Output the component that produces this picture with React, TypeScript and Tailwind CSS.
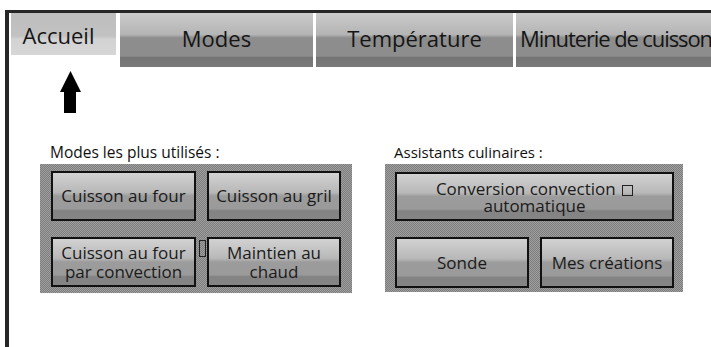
import type { ReactNode } from 'react';

const tabBg =
  'bg-[linear-gradient(to_bottom,#cbcbcb_0%,#b4b4b4_40%,#8d8d8d_46%,#8d8d8d_80%,#747474_82%,#7a7a7a_100%)]';
const btnBg =
  'bg-[linear-gradient(to_bottom,#d2d2d2_0%,#b8b8b8_42%,#9c9c9c_50%,#9a9a9a_78%,#838383_82%,#858585_100%)]';
const panelBg = 'bg-[repeating-conic-gradient(#7c7c7c_0_25%,#a0a0a0_0_50%)] bg-[length:2px_2px]';

function Tab({ label, width, active, className = '' }: { label: string; width: string; active?: boolean; className?: string }) {
  return (
    <div
      className={`${width} flex items-center justify-center whitespace-nowrap text-[22px] text-[#151515] ${
        active
          ? 'h-[42px] bg-[linear-gradient(to_bottom,#bdbdbd_0%,#c2c2c2_55%,#d3d3d3_62%,#d6d6d6_100%)] pt-[2px]'
          : `h-[54px] ${tabBg} pb-[4px]`
      } ${className}`}
    >
      {label}
    </div>
  );
}

function Btn({ children, className = '' }: { children: ReactNode; className?: string }) {
  return (
    <div
      className={`flex items-center justify-center text-center border-2 border-[#111] text-[17px] text-[#1a1a1a] ${btnBg} ${className}`}
    >
      {children}
    </div>
  );
}

function Tofu({ className = '' }: { className?: string }) {
  return <span className={`inline-block border border-[#222] ${className}`} />;
}

export default function App() {
  return (
    <div
      className="w-[711px] h-[347px] bg-white pt-[10px] pl-[5px] overflow-hidden"
      style={{ fontFamily: '"Open Sans", "Noto Sans", sans-serif' }}
    >
      <div className="h-full border-l-4 border-t-[3px] border-[#262626]">
        {/* Tabs */}
        <div className="flex items-start pl-[2px]">
          <Tab label="Accueil" width="w-[105px]" active className="pr-[10px]" />
          <Tab label="Modes" width="w-[193px]" className="ml-[4px]" />
          <Tab label="Température" width="w-[197px]" className="ml-[3px]" />
          <Tab
            label="Minuterie de cuisson"
            width="w-[195px]"
            className="ml-[3px] justify-start pl-[4px] text-[21px] tracking-[-1.1px] overflow-hidden"
          />
        </div>

        {/* Arrow pointing to the active tab */}
        <svg width="21" height="42" viewBox="0 0 21 42" className="ml-[51px] mt-[4px] block">
          <polygon points="10.5,0 21,21 16,21 16,42 4,42 4,21 0,21" fill="#000" />
        </svg>

        <div className="flex items-start mt-[29px]">
          {/* Modes les plus utilisés */}
          <div className="ml-[31px]">
            <p className="pl-[10px] text-[15.5px] leading-[20px] text-[#111]">Modes les plus utilisés :</p>
            <div className={`relative mt-[2px] w-[312px] ${panelBg} pt-[7px] pb-[6px] pl-[11px] flex flex-col gap-[16px]`}>
              <div className="flex gap-[11px]">
                <Btn className="w-[145px] h-[50px]">Cuisson au four</Btn>
                <Btn className="w-[134px] h-[50px]">Cuisson au gril</Btn>
              </div>
              <div className="flex gap-[11px]">
                <Btn className="w-[145px] h-[50px] leading-[19px]">
                  Cuisson au four
                  <br />
                  par convection
                </Btn>
                <Btn className="w-[134px] h-[50px] leading-[19px] text-[16px]">
                  Maintien au
                  <br />
                  chaud
                </Btn>
              </div>
              <Tofu className="absolute left-[159px] top-[76px] w-[7px] h-[17px]" />
            </div>
          </div>

          {/* Assistants culinaires */}
          <div className="ml-[33px]">
            <p className="pl-[9px] text-[15px] leading-[20px] text-[#111]">Assistants culinaires :</p>
            <div className={`mt-[2px] w-[298px] ${panelBg} pt-[8px] pb-[4px] pl-[10px] flex flex-col gap-[16px]`}>
              <Btn className="w-[279px] h-[49px] leading-[17px]">
                <span>
                  Conversion convection <Tofu className="w-[11px] h-[11px] align-[-1px] ml-[2px]" />
                  <br />
                  automatique
                </span>
              </Btn>
              <div className="flex gap-[11px]">
                <Btn className="w-[134px] h-[51px]">Sonde</Btn>
                <Btn className="w-[134px] h-[51px]">Mes créations</Btn>
              </div>
            </div>
          </div>
        </div>
      </div>
    </div>
  );
}
